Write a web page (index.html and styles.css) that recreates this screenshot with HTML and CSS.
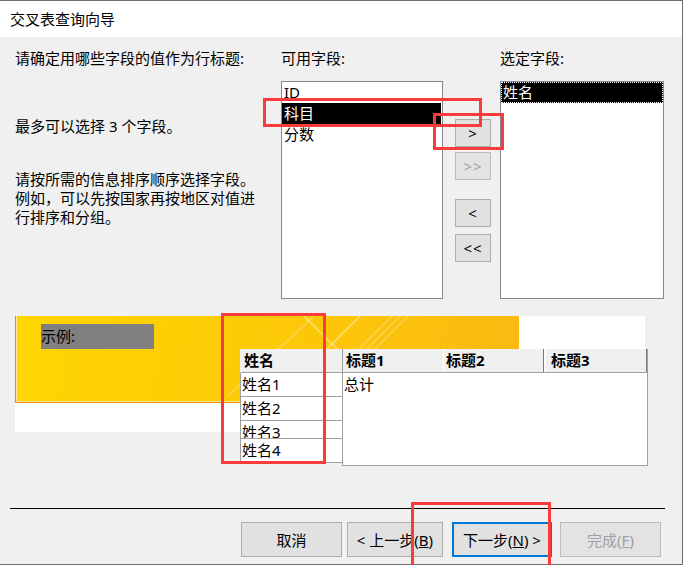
FILE: index.html
```html
<!DOCTYPE html>
<html>
<head>
    <title>交叉表查询向导</title>
    <link rel="stylesheet" href="styles.css">
</head>

<body>

<div class="window">
    <div class="titlebar">交叉表查询向导</div>

    <div class="main">
        <div class="top">
            <div class="intro">
                <p class="lead">请确定用哪些字段的值作为行标题:</p>
                <p class="limit">最多可以选择 3 个字段。</p>
                <p class="order">请按所需的信息排序顺序选择字段。<br>例如，可以先按国家再按地区对值进<br>行排序和分组。</p>
            </div>

            <div class="field-col avail">
                <div class="col-label">可用字段:</div>
                <ul class="listbox">
                    <li>ID</li>
                    <li class="sel">科目</li>
                    <li>分数</li>
                </ul>
            </div>

            <div class="movers">
                <button class="btn mover">&gt;</button>
                <button class="btn mover all" disabled>&gt;&gt;</button>
                <button class="btn mover back">&lt;</button>
                <button class="btn mover back-all">&lt;&lt;</button>
            </div>

            <div class="field-col chosen">
                <div class="col-label">选定字段:</div>
                <ul class="listbox">
                    <li class="sel focus">姓名</li>
                </ul>
            </div>
        </div>

        <div class="sample">
            <div class="banner">
                <svg class="banner-art" width="503" height="86" viewBox="0 0 503 86">
                    <line x1="298" y1="0" x2="212" y2="80" stroke="#fff" stroke-opacity="0.22" stroke-width="2"/>
                    <line x1="288" y1="0" x2="336" y2="48" stroke="#fff" stroke-opacity="0.35" stroke-width="2"/>
                    <line x1="344" y1="0" x2="296" y2="48" stroke="#fff" stroke-opacity="0.35" stroke-width="2"/>
                    <line x1="343" y1="33" x2="376" y2="0" stroke="#fff" stroke-opacity="0.22" stroke-width="2"/>
                    <line x1="351" y1="33" x2="384" y2="0" stroke="#fff" stroke-opacity="0.22" stroke-width="2"/>
                    <line x1="359" y1="33" x2="392" y2="0" stroke="#fff" stroke-opacity="0.22" stroke-width="2"/>
                </svg>
                <div class="banner-tag">示例:</div>
            </div>

            <div class="preview">
                <div class="rowhdr">
                    <div class="rh-head">姓名</div>
                    <div class="rh-row">姓名1</div>
                    <div class="rh-row">姓名2</div>
                    <div class="rh-row short">姓名3</div>
                    <div class="rh-row">姓名4</div>
                </div>
                <div class="grid">
                    <div class="grid-head">
                        <div class="gh c1">标题1</div>
                        <div class="gh c2">标题2</div>
                        <div class="gh c3">标题3</div>
                    </div>
                    <div class="grid-row">总计</div>
                </div>
            </div>
        </div>

        <div class="divider"></div>

        <div class="actions">
            <button class="btn act cancel">取消</button>
            <button class="btn act prev">&lt; 上一步(<u>B</u>)</button>
            <button class="btn act next">下一步(<u>N</u>) &gt;</button>
            <button class="btn act finish" disabled>完成(<u>F</u>)</button>
        </div>
    </div>

    <div class="mark mark-item"></div>
    <div class="mark mark-add"></div>
    <div class="mark mark-rows"></div>
    <div class="mark mark-next"></div>
</div>

</body>
</html>
```

FILE: styles.css
```css
html, body {
    overflow: hidden;
}

body {
    margin: 0;
    background: #f0f0f0;
    font-family: "Noto Sans", "Noto Sans CJK SC", sans-serif;
    font-size: 15px;
    color: #000;
}

.window {
    position: relative;
    width: 683px;
    height: 565px;
    box-sizing: border-box;
    border-top: 1px solid #6e6e6e;
    border-right: 1px solid #6e6e6e;
    border-bottom: 1px solid #6e6e6e;
    background: #f0f0f0;
}

.titlebar {
    height: 36px;
    line-height: 36px;
    padding-left: 10px;
    background: #fff;
}

.main {
    padding: 11px 0 0 15px;
}

/* top part: help text + the two lists */
.top {
    display: flex;
    height: 251px;
}

.intro {
    width: 266px;
}

.intro p {
    margin: 0;
}

.lead {
    line-height: 20px;
}

.limit {
    margin-top: 49px !important;
    line-height: 19px;
}

.order {
    margin-top: 34px !important;
    line-height: 19px;
}

.field-col.avail {
    width: 162px;
}

.field-col.chosen {
    width: 164px;
    margin-left: 9px;
}

.col-label {
    height: 20px;
    line-height: 20px;
    margin-bottom: 13px;
}

.listbox {
    height: 218px;
    box-sizing: border-box;
    margin: 0;
    padding: 0;
    list-style: none;
    background: #fff;
    border: 1px solid #828790;
}

.listbox li {
    height: 21px;
    line-height: 21px;
    padding-left: 2px;
}

.avail .listbox li.sel {
    margin-right: 1px;
}

.listbox li.sel {
    background: #000;
    color: #fff;
}

.listbox li.focus {
    outline: 1px dotted #fff;
    outline-offset: -1px;
}

.btn {
    padding: 0;
    background: #e1e1e1;
    border: 1px solid #adadad;
    font-family: inherit;
    font-size: 15px;
    color: #000;
    box-sizing: border-box;
}

.btn:disabled {
    color: #a0a0a0;
    background: #e3e3e3;
    border-color: #bcbcbc;
}

.movers {
    display: flex;
    flex-direction: column;
    width: 36px;
    margin-left: 12px;
    padding-top: 71px;
}

.mover {
    width: 36px;
    height: 28px;
    line-height: 24px;
    letter-spacing: 1px;
}

.mover.all {
    margin-top: 5px;
}

.mover.back {
    margin-top: 19px;
}

.mover.back-all {
    margin-top: 7px;
}

/* sample preview */
.sample {
    position: relative;
    width: 630px;
    height: 116px;
    margin-top: 17px;
    background: #fff;
}

.banner {
    position: relative;
    width: 504px;
    height: 87px;
    box-sizing: border-box;
    padding: 8px 0 0 25px;
    border-left: 1px solid #ef8a00;
    border-bottom: 1px solid #ef8a00;
    box-shadow: inset 1px -1px 0 #ffe9a0;
    background: linear-gradient(100deg, #ffd602 0%, #fdcb06 45%, #fab912 100%);
}

.banner-art {
    position: absolute;
    left: 0;
    top: 0;
}

.banner-tag {
    position: relative;
    width: 113px;
    height: 25px;
    line-height: 25px;
    background: #808080;
}

.preview {
    position: absolute;
    left: 225px;
    top: 33px;
    display: flex;
}

.rowhdr {
    width: 102px;
}

.rh-head {
    height: 24px;
    line-height: 23px;
    box-sizing: border-box;
    padding-left: 3px;
    background: #f0f0f0;
    border-left: 1px solid #f0f0f0;
    border-bottom: 1px solid #a0a0a0;
    font-weight: bold;
}

.rh-row {
    height: 24px;
    line-height: 23px;
    box-sizing: border-box;
    padding-left: 1px;
    background: #fff;
    border-left: 1px solid #a0a0a0;
    border-bottom: 1px solid #a0a0a0;
}

/* this row is squeezed, its label gets cut at the bottom */
.rh-row.short {
    height: 18px;
    line-height: 23px;
    overflow: hidden;
}

.grid {
    width: 306px;
    height: 117px;
    box-sizing: border-box;
    background: #fff;
    border: 1px solid #a0a0a0;
    border-top: none;
}

.grid-head {
    display: flex;
    height: 24px;
    box-sizing: border-box;
    background: #f0f0f0;
    border-bottom: 1px solid #a0a0a0;
}

.gh {
    line-height: 23px;
    font-weight: bold;
    box-sizing: border-box;
}

.gh.c1 {
    width: 101px;
    padding-left: 3px;
    border-right: 1px solid #fff;
}

.gh.c2 {
    width: 100px;
    padding-left: 2px;
    border-right: 1px solid #7a7a7a;
}

.gh.c3 {
    flex: 1;
    padding-left: 5px;
    border-left: 2px solid #fafafa;
    border-right: 1px solid #7a7a7a;
}

.grid-row {
    line-height: 22px;
    padding-left: 1px;
}

.divider {
    width: 655px;
    height: 1px;
    margin: 76px 0 0 -5px;
    background: #000;
}

/* wizard buttons */
.actions {
    display: flex;
    margin-top: 13px;
    padding-left: 226px;
}

.act {
    height: 35px;
}

.act.cancel {
    width: 101px;
}

.act.prev {
    width: 96px;
    margin-left: 5px;
}

.act.next {
    width: 100px;
    margin-left: 9px;
    border: 2px solid #0078d7;
}

.act.finish {
    width: 101px;
    margin-left: 8px;
}

/* red callouts drawn on top of the dialog */
.mark {
    position: absolute;
    box-sizing: border-box;
    border: 3px solid #fa3b3b;
}

.mark-item {
    left: 263px;
    top: 97px;
    width: 219px;
    height: 29px;
}

.mark-add {
    left: 433px;
    top: 112px;
    width: 71px;
    height: 37px;
}

.mark-rows {
    left: 221px;
    top: 312px;
    width: 105px;
    height: 151px;
}

.mark-next {
    left: 411px;
    top: 501px;
    width: 140px;
    height: 80px;
}
```
